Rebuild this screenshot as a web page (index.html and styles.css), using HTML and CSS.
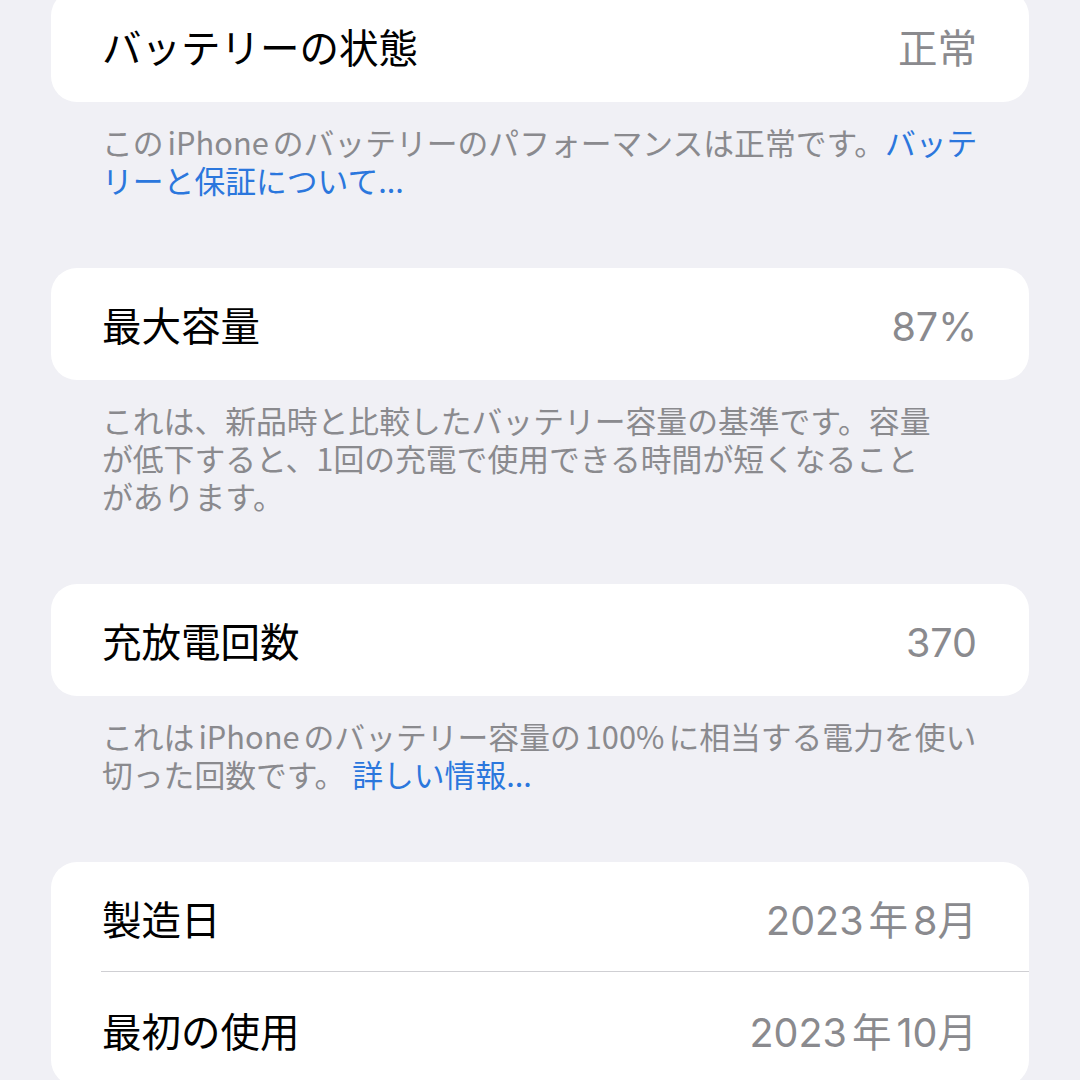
FILE: index.html
```html
<!DOCTYPE html>
<html lang="ja">
<head>
<meta charset="utf-8">
<title>バッテリーの状態</title>
<link rel="stylesheet" href="styles.css">
</head>
<body>
<main class="page">
  <section class="group first">
    <div class="card">
      <div class="row"><span class="label">バッテリーの状態</span><span class="value">正常</span></div>
    </div>
    <p class="footer">この<span class="latin">iPhone</span>のバッテリーのパフォーマンスは正常です。<a class="link">バッテ<br>リーと保証について...</a></p>
  </section>
  <section class="group">
    <div class="card">
      <div class="row"><span class="label">最大容量</span><span class="value num">87%</span></div>
    </div>
    <p class="footer">これは、新品時と比較したバッテリー容量の基準です。容量<br>が低下すると、1回の充電で使用できる時間が短くなること<br>があります。</p>
  </section>
  <section class="group">
    <div class="card">
      <div class="row"><span class="label">充放電回数</span><span class="value num">370</span></div>
    </div>
    <p class="footer">これは<span class="latin">iPhone</span>のバッテリー容量の<span class="latin">100%</span>に相当する電力を使い<br>切った回数です。 <a class="link">詳しい情報...</a></p>
  </section>
  <section class="group">
    <div class="card">
      <div class="row divided"><span class="label">製造日</span><span class="value num">2023<span class="cjk">年</span>8月</span></div>
      <div class="row"><span class="label">最初の使用</span><span class="value num">2023<span class="cjk">年</span>10月</span></div>
    </div>
  </section>
</main>
</body>
</html>
```
FILE: styles.css
```css
html, body {
  margin: 0;
  padding: 0;
  background: #f0f0f5;
}
body {
  width: 1080px;
  height: 1080px;
  overflow: hidden;
  font-family: "Noto Sans CJK JP", sans-serif;
}
.page {
  display: flex;
  flex-direction: column;
  padding: 0 51px;
}
.group.first {
  margin-top: -10px;
}
.card {
  background: #ffffff;
  border-radius: 26px;
  overflow: hidden;
}
.row {
  height: 112px;
  display: flex;
  align-items: center;
  justify-content: space-between;
  padding: 0 52px 0 51px;
  box-sizing: border-box;
  position: relative;
}
.row.divided::after {
  content: "";
  position: absolute;
  left: 50px;
  right: 0;
  bottom: 2px;
  height: 1px;
  background: #cfcfd3;
}
.label {
  font-size: 39.5px;
  color: #000000;
  line-height: 1;
}
.value {
  font-size: 39.5px;
  color: #8a8a8e;
  line-height: 1;
}
.value.num {
  font-family: Inter, "Noto Sans CJK JP", sans-serif;
  padding-top: 7px;
}
.cjk {
  margin: 0 5px;
}
.footer {
  margin: 0;
  padding: 21px 0 69px 51px;
  font-size: 30.8px;
  line-height: 38px;
  color: #8a8a8e;
  white-space: nowrap;
}
.latin {
  margin: 0 4px;
}
.link {
  color: #2b77dd;
}
```
